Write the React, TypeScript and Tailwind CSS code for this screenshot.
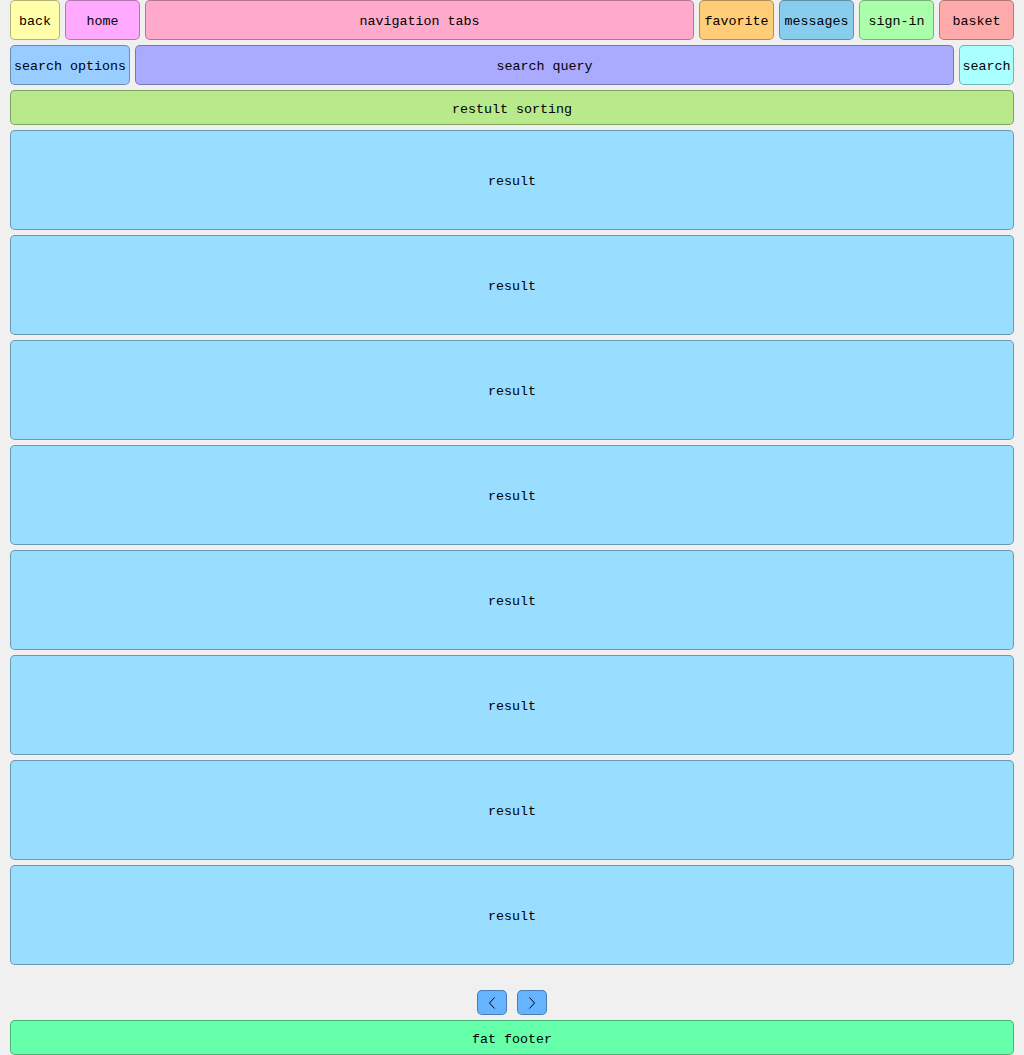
const box = "flex items-center justify-center rounded-[5px] border border-black/30 text-black pt-[4px]"

function Chevron({ dir }: { dir: "left" | "right" }) {
  return (
    <svg width="8" height="14" viewBox="0 0 8 14" fill="none" stroke="#000" strokeWidth="1">
      {dir === "left" ? <path d="M6.5 1.5 L1.5 7 L6.5 12.5" /> : <path d="M1.5 1.5 L6.5 7 L1.5 12.5" />}
    </svg>
  )
}

export default function App() {
  const results = Array.from({ length: 8 }, (_, i) => i)

  return (
    <div
      className="min-h-[1055px] bg-[#f0f0f0] px-[10px] flex flex-col gap-[5px] text-[13.33px]"
      style={{ fontFamily: '"Liberation Mono", "DejaVu Sans Mono", monospace' }}
    >
      <div className="flex gap-[5px] h-[40px]">
        <div className={`${box} w-[50px] bg-[#ffffaa]`}>back</div>
        <div className={`${box} w-[75px] bg-[#ffaaff]`}>home</div>
        <div className={`${box} flex-1 bg-[#ffaacc]`}>navigation tabs</div>
        <div className={`${box} w-[75px] bg-[#ffcc77]`}>favorite</div>
        <div className={`${box} w-[75px] bg-[#88ccee]`}>messages</div>
        <div className={`${box} w-[75px] bg-[#aaffaa]`}>sign-in</div>
        <div className={`${box} w-[75px] bg-[#ffaaaa]`}>basket</div>
      </div>

      <div className="flex gap-[5px] h-[40px]">
        <div className={`${box} w-[120px] bg-[#99ccff]`}>search options</div>
        <div className={`${box} flex-1 bg-[#aaaaff]`}>search query</div>
        <div className={`${box} w-[55px] bg-[#aaffff]`}>search</div>
      </div>

      <div className={`${box} h-[35px] bg-[#b8e98a]`}>restult sorting</div>

      {results.map((i) => (
        <div key={i} className={`${box} h-[100px] bg-[#99ddff]`}>
          result
        </div>
      ))}

      <div className="flex justify-center gap-[10px] mt-[20px]">
        <button className="flex items-center justify-center rounded-[5px] border border-black/30 w-[30px] h-[25px] bg-[#66b3ff]">
          <Chevron dir="left" />
        </button>
        <button className="flex items-center justify-center rounded-[5px] border border-black/30 w-[30px] h-[25px] bg-[#66b3ff]">
          <Chevron dir="right" />
        </button>
      </div>

      <div className={`${box} h-[35px] bg-[#66ffaa]`}>fat footer</div>
    </div>
  )
}
